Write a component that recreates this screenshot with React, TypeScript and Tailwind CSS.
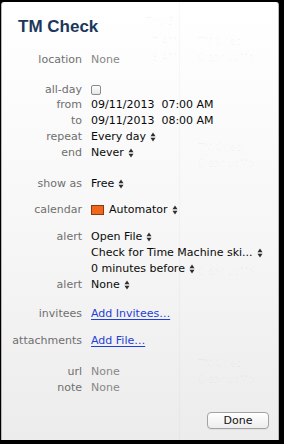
import React from "react";

const Arrows = () => (
  <svg width="6" height="10" viewBox="0 0 6 10" className="ml-[4px] inline-block shrink-0">
    <path d="M0.5 4.2 L3 0.6 L5.5 4.2 Z" fill="#2e2e2e" />
    <path d="M0.5 5.8 L3 9.4 L5.5 5.8 Z" fill="#2e2e2e" />
  </svg>
);

const Row = ({
  label,
  children,
  className = "",
}: {
  label?: string;
  children?: React.ReactNode;
  className?: string;
}) => (
  <div className={`relative grid grid-cols-[80px_1fr] gap-x-[9px] h-4 leading-4 ${className}`}>
    <div className="text-right text-[#6f6f6f] whitespace-nowrap">{label}</div>
    <div className="flex items-center whitespace-nowrap text-[#0a0a0a]">{children}</div>
  </div>
);

const Ghost = ({ top, left, text }: { top: number; left: number; text: string }) => (
  <div
    className="absolute text-[10px] leading-3 text-black/[0.035] whitespace-nowrap"
    style={{ top, left }}
  >
    {text}
  </div>
);

export default function App() {
  return (
    <div className="w-[284px] h-[444px] bg-black pt-[2px] pr-[5px] pb-[4px] pl-[1px]">
      <div
        className="relative h-full flex flex-col rounded-t-[3px] border-l border-r border-[#b8b8b8] bg-gradient-to-b from-white via-[#f7f7f7] to-[#ececec] text-[11px]"
        style={{ fontFamily: '"DejaVu Sans", "Noto Sans", sans-serif' }}
      >
        <div className="absolute left-[177px] top-0 bottom-0 w-px bg-black/[0.025]" />
        <Ghost top={14} left={144} text="Thu 5" />
        <Ghost top={34} left={150} text="7 AM" />
        <Ghost top={34} left={184} text="◎ TM Check" />
        <Ghost top={50} left={150} text="8 AM" />
        <Ghost top={50} left={184} text="◎ CleanUpMail" />
        <Ghost top={140} left={184} text="◎ TM Check" />
        <Ghost top={156} left={184} text="◎ CleanUpMail" />
        <Ghost top={264} left={184} text="◎ CleanUpMail" />
        <Ghost top={356} left={184} text="◎ TM Check" />
        <Ghost top={372} left={184} text="◎ CleanUpMail" />

        <div
          className="relative mt-[15px] ml-[16px] h-5 leading-5 text-[17px] font-bold text-[#1b375c]"
          style={{ fontFamily: '"Liberation Sans", Arial, sans-serif' }}
        >
          TM Check
        </div>

        <Row label="location" className="mt-[15px]">
          <span className="text-[#888]">None</span>
        </Row>

        <Row label="all-day" className="mt-[14px] !h-[15px]">
          <span className="block w-[10px] h-[10px] rounded-[2px] border border-[#8c8c8c] bg-gradient-to-b from-white to-[#e6e6e6]" />
        </Row>
        <Row label="from">09/11/2013&nbsp;&nbsp;07:00 AM</Row>
        <Row label="to">09/11/2013&nbsp;&nbsp;08:00 AM</Row>
        <Row label="repeat">
          Every day <Arrows />
        </Row>
        <Row label="end">
          Never <Arrows />
        </Row>

        <Row label="show as" className="mt-[15px]">
          Free <Arrows />
        </Row>

        <Row label="calendar" className="mt-[10px]">
          <span className="block w-[13px] h-[10px] mr-[5px] bg-[#f0661c] border border-[#8a3b12]" />
          Automator <Arrows />
        </Row>

        <Row label="alert" className="mt-[11px]">
          Open File <Arrows />
        </Row>
        <Row>
          Check for Time Machine ski... <Arrows />
        </Row>
        <Row>
          0 minutes before <Arrows />
        </Row>
        <Row label="alert">
          None <Arrows />
        </Row>

        <Row label="invitees" className="mt-[13px]">
          <span className="text-[#1f3fd6] underline underline-offset-2">Add Invitees…</span>
        </Row>
        <Row label="attachments" className="mt-[11px]">
          <span className="text-[#1f3fd6] underline underline-offset-2">Add File…</span>
        </Row>

        <Row label="url" className="mt-[15px]">
          <span className="text-[#888]">None</span>
        </Row>
        <Row label="note">
          <span className="text-[#888]">None</span>
        </Row>

        <div className="relative mt-[16px] flex justify-end pr-[9px]">
          <button className="w-[62px] h-[17px] leading-[15px] rounded-[4px] border border-[#a3a3a3] bg-gradient-to-b from-white to-[#ededed] text-[11px] text-[#111] shadow-[0_1px_0_rgba(0,0,0,0.06)]">
            Done
          </button>
        </div>
      </div>
    </div>
  );
}
